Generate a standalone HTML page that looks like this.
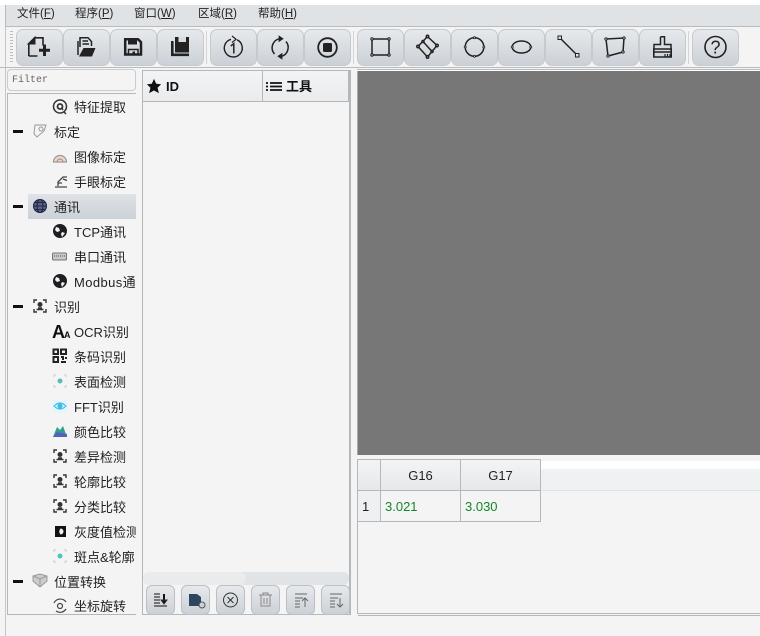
<!DOCTYPE html>
<html lang="zh"><head><meta charset="utf-8">
<style>
html,body{margin:0;padding:0;background:#f4f4f4}
body{width:760px;height:636px;position:relative;overflow:hidden;font-family:"Liberation Sans","Noto Sans CJK SC",sans-serif;font-size:13px;color:#222}
.a{position:absolute;box-sizing:border-box}
.m{position:absolute;top:7px;font-size:11.5px;line-height:14px;white-space:nowrap}
.m u{text-underline-offset:1px}
.b{position:absolute;top:29px;width:47px;height:37px;box-sizing:border-box;border:1px solid #c6cacd;border-radius:7px;background:linear-gradient(#e6e9ec,#ccd1d7)}
.b svg{position:absolute;left:0;top:0;width:45px;height:35px;fill:none;stroke:#222;stroke-width:1.5}
.s{position:absolute;top:585px;width:29px;height:30px;box-sizing:border-box;border:1px solid #bdc0c3;border-radius:6px;background:linear-gradient(#e6e9ec,#ccd1d7)}
.s svg{position:absolute;left:0;top:0;width:27px;height:28px;fill:none;stroke:#333;stroke-width:1}
.t{position:absolute;height:20px;line-height:20px;font-size:13px;white-space:nowrap;overflow:hidden;margin-top:1px}
.i{position:absolute;width:18px;height:18px;fill:none;stroke:#333;stroke-width:1.3}
.minus{position:absolute;left:13px;width:10px;height:3px;background:#111}
.th{position:absolute;top:460px;height:31px;box-sizing:border-box;border-right:1px solid #b5b8ba;border-bottom:1px solid #b5b8ba;background:linear-gradient(#f3f4f5,#e6e8ea);text-align:center;line-height:32px;font-size:13px}
.td{position:absolute;top:491px;height:31px;box-sizing:border-box;border-right:1px solid #b5b8ba;border-bottom:1px solid #b5b8ba;line-height:32px;font-size:13px;padding-left:4px;color:#12862a}
</style></head><body>
<div class="a" style="left:0;top:0;width:760px;height:5px;background:#fff"></div>
<div class="a" style="left:5px;top:5px;width:755px;height:22px;background:#e0e3e6;border-bottom:1px solid #b9bcbe;border-left:1px solid #b9bcbe"></div>
<div class="a" style="left:5px;top:27px;width:1px;height:609px;background:#c4c6c8"></div>
<div class="m" style="left:17px">文件(<u>F</u>)</div>
<div class="m" style="left:75px">程序(<u>P</u>)</div>
<div class="m" style="left:134px">窗口(<u>W</u>)</div>
<div class="m" style="left:198px">区域(<u>R</u>)</div>
<div class="m" style="left:258px">帮助(<u>H</u>)</div>

<div class="a" style="left:10px;top:31px;width:3px;height:33px;background:repeating-linear-gradient(#bbb 0 1px,transparent 1px 3px)"></div>
<div class="a" style="left:206px;top:31px;width:1px;height:33px;background:#d2d4d6"></div>
<div class="a" style="left:353px;top:31px;width:1px;height:33px;background:#d2d4d6"></div>
<div class="a" style="left:688px;top:31px;width:1px;height:33px;background:#d2d4d6"></div>

<div class="b" style="left:16px"><svg viewBox="0 0 45 35"><path d="M11.800 26V14.500M11.800 26H20.500M18 7.800H26V15.500" stroke-width="1.600"/><path d="M18 7V14H11Z" fill="#222" stroke="#222" stroke-width="1"/><path d="M27.500 14.500V26M22 20.200H33" stroke-width="3"/></svg></div>
<div class="b" style="left:63px"><svg viewBox="0 0 45 35" stroke-width="1.300"><path d="M16 17V7.700H24L27.500 11.500V16M18.500 11H24M18.500 14H25"/><path d="M14 11V25" stroke-width="1.500"/><path d="M15 26.500H28L31.500 18H19.500L15 26.500Z" fill="#222" stroke="none"/></svg></div>
<div class="b" style="left:110px"><svg viewBox="0 0 45 35"><path d="M14.200 9.200H27L30 12.200V24.500H14.200Z" stroke-width="2.500"/><path d="M17 9H26V14.500H17Z" fill="#222" stroke="none"/><path d="M17.500 25V19.500H27V25" stroke-width="1.500"/><path d="M21.500 22.500H24" stroke-width="2"/></svg></div>
<div class="b" style="left:157px"><svg viewBox="0 0 45 35"><path d="M17 7H31V22.500H17Z" fill="#222" stroke="none"/><path d="M20.500 7H28V12H20.500Z" fill="#d9dde0" stroke="none"/><path d="M14.300 11V24.800H31" stroke-width="2.600"/></svg></div>
<div class="b" style="left:210px"><svg viewBox="0 0 45 35"><path d="M26 9.800A9 9 0 1 1 20 9.300" stroke-width="1.400"/><path d="M21 6L25 9.300L21 12.500" stroke-width="1.200"/><path d="M19.800 16L22.800 13.700V23.500" stroke-width="1.500"/></svg></div>
<div class="b" style="left:257px"><svg viewBox="0 0 45 35" stroke-width="1.400"><path d="M16.500 24A9.300 9.300 0 0 1 21 8.800M28 11.500A9.300 9.300 0 0 1 24 26.200"/><path d="M21 6V11.500L25 8.800Z" fill="#222" stroke-width="0.800"/><path d="M24 23.500V29L20 26.200Z" fill="#222" stroke-width="0.800"/></svg></div>
<div class="b" style="left:304px"><svg viewBox="0 0 45 35"><circle cx="22.500" cy="17.500" r="9.300" stroke-width="1.800"/><rect x="18" y="13" width="9" height="9" rx="1.500" fill="#222" stroke="none"/></svg></div>
<div class="b" style="left:357px"><svg viewBox="0 0 45 35" stroke-width="1.300"><rect x="14" y="9" width="17" height="16"/><g fill="#ccc" stroke-width="1"><circle cx="14" cy="9" r="1.200"/><circle cx="31" cy="9" r="1.200"/><circle cx="14" cy="25" r="1.200"/><circle cx="31" cy="25" r="1.200"/></g></svg></div>
<div class="b" style="left:404px"><svg viewBox="0 0 45 35" stroke-width="1"><path d="M22.500 6.500L32 15.500L22.500 27L13 16.500Z"/><path d="M18 11.500L27 21.500"/><g fill="#ccc"><circle cx="22.500" cy="6.500" r="1.200"/><circle cx="32" cy="15.500" r="1.200"/><circle cx="22.500" cy="27" r="1.200"/><circle cx="13" cy="16.500" r="1.200"/><circle cx="18" cy="11.500" r="1"/><circle cx="27" cy="21.500" r="1"/></g></svg></div>
<div class="b" style="left:451px"><svg viewBox="0 0 45 35" stroke-width="1"><circle cx="22.500" cy="17" r="9.300"/><g fill="#ccc" stroke-width=".8"><circle cx="22.500" cy="7.700" r="1"/><circle cx="31.800" cy="17" r="1"/><circle cx="22.500" cy="26.300" r="1"/><circle cx="13.200" cy="17" r="1"/></g></svg></div>
<div class="b" style="left:498px"><svg viewBox="0 0 45 35" stroke-width="1.100"><ellipse cx="22.500" cy="17" rx="9.300" ry="6"/><g fill="#ccc" stroke-width=".8"><circle cx="13.200" cy="17" r="1"/><circle cx="31.800" cy="17" r="1"/></g></svg></div>
<div class="b" style="left:545px"><svg viewBox="0 0 45 35" stroke-width="1.300"><path d="M14 8L31 25"/><rect x="12" y="6" width="3.500" height="3.500" fill="#ddd" stroke-width="1"/><rect x="29.500" y="23.500" width="3.500" height="3.500" fill="#ddd" stroke-width="1"/></svg></div>
<div class="b" style="left:592px"><svg viewBox="0 0 45 35" stroke-width="1.200"><path d="M13 9L31 8L30 22L15 26Z"/><g fill="#ccc" stroke-width=".9"><circle cx="13" cy="9" r="1.200"/><circle cx="31" cy="8" r="1.200"/><circle cx="30" cy="22" r="1.200"/><circle cx="15" cy="26" r="1.200"/></g></svg></div>
<div class="b" style="left:639px"><svg viewBox="0 0 45 35" stroke-width="1.500"><path d="M20.500 6.800H24.500V14.500H31V19M14 19V14.500H20.500V6.800"/><path d="M13.800 19H31.200V27H13.800ZM13.800 22H31.200" stroke-width="1.600"/><path d="M25 27V24M27.500 27V24M30 27V24" stroke-width="1.200"/></svg></div>
<div class="b" style="left:692px"><svg viewBox="0 0 45 35"><circle cx="22.500" cy="17" r="10.500" stroke-width="1.600"/><text x="22.500" y="23.500" font-size="18" text-anchor="middle" fill="#222" stroke="none" font-family="Liberation Sans">?</text></svg></div>

<div class="a" style="left:0;top:67px;width:760px;height:1px;background:#b9bcbe"></div>
<div class="a" style="left:357px;top:69px;width:403px;height:1px;background:#b9bcbe"></div>
<div class="a" style="left:357px;top:70px;width:403px;height:1px;background:#fff"></div>

<!-- Filter -->
<div class="a" style="left:7px;top:69px;width:129px;height:22px;border:1px solid #c9cbcd;border-radius:4px;font:10px/22px 'Liberation Mono',monospace;padding-left:4px;color:#666">Filter</div>
<!-- Tree -->
<div class="a" style="left:7px;top:93px;width:1px;height:522px;background:#b5b8ba"></div>
<div class="a" style="left:7px;top:93px;width:129px;height:1px;background:#b5b8ba"></div>
<div class="a" style="left:7px;top:614px;width:129px;height:1px;background:#b5b8ba"></div>
<div class="a" style="left:28px;top:194px;width:108px;height:25px;background:linear-gradient(#dfe2e6,#ccd1d8)"></div>

<svg class="i" style="left:51px;top:98px;stroke-width:1.500" viewBox="0 0 18 18"><circle cx="9" cy="8.500" r="6.500"/><circle cx="9" cy="8.500" r="2.500" stroke-width="1.800"/><path d="M11 10.500L12 12M13 14L15 16"/></svg>
<div class="t" style="left:74px;top:97px">特征提取</div>
<div class="minus" style="top:130px"></div>
<svg class="i" style="left:31px;top:122px;stroke:#999;stroke-width:1" viewBox="0 0 18 18"><path d="M4 3H15L13 9L6 15L3 12Z"/><circle cx="10" cy="7" r="2"/></svg>
<div class="t" style="left:54px;top:122px">标定</div>
<svg class="i" style="left:51px;top:148px;stroke:#a89488;stroke-width:1.200" viewBox="0 0 18 18"><path d="M2.500 14A6.500 6.500 0 0 1 15.500 14Z" fill="#e6dcd5"/><path d="M6 14A3 3 0 0 1 12 14"/></svg>
<div class="t" style="left:74px;top:147px">图像标定</div>
<svg class="i" style="left:52px;top:172px;stroke:#444;stroke-width:1.300" viewBox="0 0 18 18"><path d="M3 15H15M6 14V10L11 5H15M11 7L15 8.500M6 11H10"/></svg>
<div class="t" style="left:74px;top:172px">手眼标定</div>
<div class="minus" style="top:205px"></div>
<svg class="i" style="left:31px;top:197px;stroke:#20284a;stroke-width:1.100" viewBox="0 0 18 18"><circle cx="9" cy="9" r="6.500" fill="#5b6385"/><ellipse cx="9" cy="9" rx="3" ry="6.500"/><path d="M2.500 9H15.500M3.500 5.500H14.500M3.500 12.500H14.500"/></svg>
<div class="t" style="left:54px;top:197px">通讯</div>
<svg class="i" style="left:51px;top:222px;stroke:none;fill:#1d1f22" viewBox="0 0 18 18"><path d="M9 2A7 7 0 1 0 9 16A7 7 0 0 0 9 2ZM5 5L8 6L9 9L6 10L4 8ZM11 10L14 11L11 15L10 12Z" fill-rule="evenodd"/></svg>
<div class="t" style="left:74px;top:222px">TCP通讯</div>
<svg class="i" style="left:51px;top:247px;stroke:#777;stroke-width:1" viewBox="0 0 18 18"><rect x="1.500" y="6" width="14" height="7" rx="1" fill="#c6c8ca"/><path d="M3 9H14" stroke="#555" stroke-dasharray="1 1"/></svg>
<div class="t" style="left:74px;top:247px">串口通讯</div>
<svg class="i" style="left:51px;top:272px;stroke:none;fill:#1d1f22" viewBox="0 0 18 18"><path d="M9 2A7 7 0 1 0 9 16A7 7 0 0 0 9 2ZM5 5L8 6L9 9L6 10L4 8ZM11 10L14 11L11 15L10 12Z" fill-rule="evenodd"/></svg>
<div class="t" style="left:74px;top:272px;width:62px;letter-spacing:.4px">Modbus通讯</div>
<div class="minus" style="top:305px"></div>
<svg class="i" style="left:31px;top:297px;stroke:#333;stroke-width:1.400" viewBox="0 0 18 18"><path d="M6 3H3V6M12 3H15V6M6 15H3V12M12 15H15V12"/><circle cx="9" cy="7.500" r="1.800" fill="#333"/><path d="M5.500 12.500H12.500M7 11H11" stroke-width="1.500"/></svg>
<div class="t" style="left:54px;top:297px">识别</div>
<div class="t" style="left:52px;top:321px;font-size:18px;font-weight:700;color:#111;width:20px;letter-spacing:-1px">A<span style="font-size:9px;font-weight:700">A</span></div>
<div class="t" style="left:74px;top:322px">OCR识别</div>
<svg class="i" style="left:51px;top:347px;stroke:#222;stroke-width:2" viewBox="0 0 18 18"><path d="M2.500 2.500H7V7H2.500ZM10 2.500H15V7H10ZM2.500 10H7V15H2.500ZM10 10H12V13M15 10V12M10 15H15"/></svg>
<div class="t" style="left:74px;top:347px">条码识别</div>
<svg class="i" style="left:51px;top:372px;stroke:#ccc;stroke-width:1" viewBox="0 0 18 18"><path d="M5 3H3V5M13 3H15V5M5 15H3V13M13 15H15V13"/><circle cx="9" cy="9" r="2.500" fill="#56bdb3" stroke="none"/></svg>
<div class="t" style="left:74px;top:372px">表面检测</div>
<svg class="i" style="left:51px;top:397px;stroke:#41bde8;stroke-width:1.200" viewBox="0 0 18 18"><rect x="2" y="2" width="14" height="14" fill="#e6f6fd" stroke="none"/><path d="M3 9Q9 3 15 9Q9 15 3 9Z"/><circle cx="9" cy="9" r="2" fill="#41bde8"/></svg>
<div class="t" style="left:74px;top:397px">FFT识别</div>
<svg class="i" style="left:51px;top:422px;stroke:none" viewBox="0 0 18 18"><path d="M2 15L6 5L9 8L12 4L16 15Z" fill="#2fa08a"/><path d="M2 15L6 10L10 11L16 12V15Z" fill="#5560c0"/></svg>
<div class="t" style="left:74px;top:422px">颜色比较</div>
<svg class="i" style="left:51px;top:447px;stroke:#333;stroke-width:1.400" viewBox="0 0 18 18"><path d="M6 3H3V6M12 3H15V6M6 15H3V12M12 15H15V12"/><circle cx="9" cy="7.500" r="1.800" fill="#333"/><path d="M5.500 12.500H12.500M7 11H11" stroke-width="1.500"/></svg>
<div class="t" style="left:74px;top:447px">差异检测</div>
<svg class="i" style="left:51px;top:472px;stroke:#333;stroke-width:1.400" viewBox="0 0 18 18"><path d="M6 3H3V6M12 3H15V6M6 15H3V12M12 15H15V12"/><circle cx="9" cy="7.500" r="1.800" fill="#333"/><path d="M5.500 12.500H12.500M7 11H11" stroke-width="1.500"/></svg>
<div class="t" style="left:74px;top:472px">轮廓比较</div>
<svg class="i" style="left:51px;top:497px;stroke:#333;stroke-width:1.400" viewBox="0 0 18 18"><path d="M6 3H3V6M12 3H15V6M6 15H3V12M12 15H15V12"/><circle cx="9" cy="7.500" r="1.800" fill="#333"/><path d="M5.500 12.500H12.500M7 11H11" stroke-width="1.500"/></svg>
<div class="t" style="left:74px;top:497px">分类比较</div>
<svg class="i" style="left:51px;top:522px;stroke:none" viewBox="0 0 18 18"><rect x="4" y="4" width="11" height="11" fill="#111"/><path d="M9.500 6.500A3 3 0 0 1 9.500 12.500Q7 9.500 9.500 6.500Z" fill="#eee"/></svg>
<div class="t" style="left:74px;top:522px;width:62px">灰度值检测</div>
<svg class="i" style="left:51px;top:547px;stroke:#ccc;stroke-width:1" viewBox="0 0 18 18"><path d="M5 3H3V5M13 3H15V5M5 15H3V13M13 15H15V13"/><circle cx="9" cy="9" r="2.500" fill="#4fc4bb" stroke="none"/></svg>
<div class="t" style="left:74px;top:547px;width:62px">斑点&amp;轮廓</div>
<div class="minus" style="top:580px"></div>
<svg class="i" style="left:31px;top:572px;stroke:#999;stroke-width:1" viewBox="0 0 18 18"><path d="M2 4L9 2L16 4V9L9 15L2 9Z" fill="#ccc"/><path d="M9 7V15M2 4L9 7L16 4"/></svg>
<div class="t" style="left:54px;top:572px">位置转换</div>
<svg class="i" style="left:51px;top:597px;stroke:#444;stroke-width:1.200" viewBox="0 0 18 18"><circle cx="9" cy="9" r="2.500"/><path d="M3 6A7 7 0 0 1 15 5M15 12A7 7 0 0 1 5 14"/></svg>
<div class="t" style="left:74px;top:596px">坐标旋转</div>

<!-- ID panel -->
<div class="a" style="left:142px;top:70px;width:209px;height:545px;border:1px solid #b5b8ba;border-width:1px 2px 1px 1px;background:#f4f4f4"></div>
<div class="a" style="left:143px;top:71px;width:206px;height:31px;background:linear-gradient(#f3f4f5,#e9ebed);border-bottom:1px solid #b5b8ba"></div>
<div class="a" style="left:262px;top:71px;width:1px;height:30px;background:#b5b8ba"></div>
<div class="a" style="left:348px;top:71px;width:1px;height:30px;background:#b5b8ba"></div>
<svg class="a" style="left:146px;top:78px;width:16px;height:16px" viewBox="0 0 18 18"><path d="M9 1L11.500 6.500L17 7L13 11L14.500 17L9 14L3.500 17L5 11L1 7L6.500 6.500Z" fill="#111"/></svg>
<div class="a" style="left:166px;top:78px;font-size:13px;line-height:17px;font-weight:700;color:#111">ID</div>
<svg class="a" style="left:266px;top:81px;width:17px;height:11px" viewBox="0 0 17 11"><path d="M0 2H2M4 2H16M0 5.500H2M4 5.500H16M0 9H2M4 9H16" stroke="#111" stroke-width="1.800" fill="none"/></svg>
<div class="a" style="left:286px;top:78px;font-size:13px;line-height:18px;font-weight:700;color:#111">工具</div>
<div class="a" style="left:143px;top:572px;width:206px;height:13px;background:#e1e4e6;border-radius:6px"></div>
<div class="a" style="left:143px;top:572px;width:103px;height:13px;background:#e9ebed;border-radius:6px"></div>

<div class="s" style="left:146px"><svg viewBox="0 0 27 28" stroke-width="1.300"><path d="M7 8H13M7 11H13M7 14H13M7 17H13M7 20H20" stroke="#111"/><path d="M17 8V16" stroke="#111" stroke-width="2"/><path d="M14 14L17 18L20 14Z" fill="#111"/></svg></div>
<div class="s" style="left:181px"><svg viewBox="0 0 27 28"><path d="M7 8H15L19 11V20H7Z" fill="#2f4660" stroke="none"/><circle cx="20" cy="19" r="3" fill="#cdd2d7" stroke="#555"/></svg></div>
<div class="s" style="left:216px"><svg viewBox="0 0 27 28"><circle cx="13.500" cy="14" r="7"/><path d="M10.500 11L16.500 17M16.500 11L10.500 17"/></svg></div>
<div class="s" style="left:251px"><svg viewBox="0 0 27 28" style="stroke:#888"><path d="M7 9H20M11 9V7H16V9M9 9V20H18V9M12 12V18M15 12V18"/></svg></div>
<div class="s" style="left:286px"><svg viewBox="0 0 27 28" style="stroke:#666"><path d="M8 8H20M8 12H16M8 15H13M8 18H13M8 21H13M18 21V12M15 15L18 12L21 15"/></svg></div>
<div class="s" style="left:321px"><svg viewBox="0 0 27 28" style="stroke:#666"><path d="M8 8H20M8 12H16M8 15H13M8 18H13M8 21H13M18 12V21M15 18L18 21L21 18"/></svg></div>

<!-- Image view -->
<div class="a" style="left:358px;top:71px;width:402px;height:384px;background:#777"></div>
<div class="a" style="left:357px;top:71px;width:1px;height:384px;background:#a6a8aa"></div>
<!-- Table -->
<div class="a" style="left:357px;top:459px;width:403px;height:155px;border-left:1px solid #b5b8ba;border-bottom:1px solid #b5b8ba;background:#f4f4f4"></div>
<div class="a" style="left:357px;top:459px;width:184px;height:1px;background:#b5b8ba"></div>
<div class="a" style="left:358px;top:615px;width:402px;height:1px;background:#b5b8ba"></div>
<div class="a" style="left:541px;top:461px;width:219px;height:30px;background:linear-gradient(#fff 0 7px,#f0f1f2 9px);border-bottom:1px solid #e2e3e4"></div>
<div class="th" style="left:358px;width:23px"></div>
<div class="th" style="left:381px;width:80px">G16</div>
<div class="th" style="left:461px;width:80px">G17</div>
<div class="a" style="left:358px;top:491px;width:23px;height:31px;background:#eff0f1;border-right:1px solid #b5b8ba;border-bottom:1px solid #b5b8ba;line-height:32px;font-size:13px;padding-left:4px;color:#222">1</div>
<div class="td" style="left:381px;width:80px">3.021</div>
<div class="td" style="left:461px;width:80px">3.030</div>
</body></html>
